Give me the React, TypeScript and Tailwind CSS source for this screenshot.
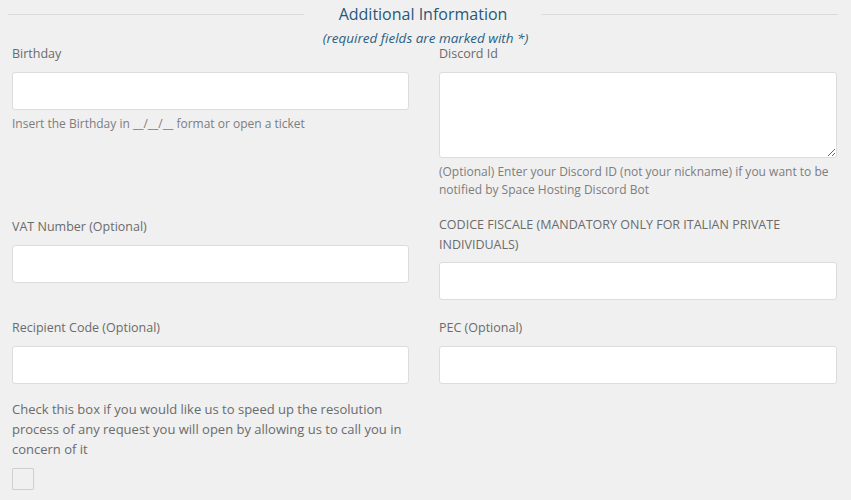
import React from "react";

function Label({ children, tight, mb }: { children: React.ReactNode; tight?: boolean; mb?: string }) {
  return (
    <div
      className={
        tight
          ? "text-[12.5px] leading-[16px] text-[#6b6b6b] mb-[10px]"
          : mb === "7"
          ? "text-[12.5px] leading-[20px] text-[#6b6b6b] mb-[7px]"
          : "text-[12.5px] leading-[20px] text-[#6b6b6b] mb-[8px]"
      }
    >
      {children}
    </div>
  );
}

function Input() {
  return (
    <input
      type="text"
      className="block w-full h-[38px] bg-white border border-[#dcdcdc] rounded-[3px] outline-none"
    />
  );
}

function Help({ children }: { children: React.ReactNode }) {
  return <div className="mt-[5px] text-[12px] leading-[18px] text-[#7d7d7d]">{children}</div>;
}

export default function App() {
  return (
    <div
      className="w-[851px] h-[500px] bg-[#f0f0f0] overflow-hidden"
      style={{ fontFamily: '"Open Sans", "Noto Sans", sans-serif' }}
    >
      <div className="flex items-center h-[28px] pl-[8px] pr-[13px]">
        <div className="flex-1 h-px bg-[#dadada]" />
        <div className="mx-[35px] text-[16px] leading-[24px] text-[#1f5a7c]">Additional Information</div>
        <div className="flex-1 h-px bg-[#dadada]" />
      </div>
      <div className="mt-[4px] text-center italic text-[13.5px] leading-[13px] text-[#2b5f80]">
        (required fields are marked with *)
      </div>
      <div className="grid grid-cols-[397px_398px] gap-x-[30px] pl-[12px] mt-[1px]">
        <div className="mb-[16px]">
          <Label tight>Birthday</Label>
          <Input />
          <Help>Insert the Birthday in __/__/__ format or open a ticket</Help>
        </div>
        <div className="mb-[16px]">
          <Label tight>Discord Id</Label>
          <textarea className="block w-full h-[86px] bg-white border border-[#dcdcdc] rounded-[3px] outline-none" />
          <Help>
            (Optional) Enter your Discord ID (not your nickname) if you want to be notified by Space Hosting
            Discord Bot
          </Help>
        </div>
        <div className="mb-[18px] pt-[2px]">
          <Label>VAT Number (Optional)</Label>
          <Input />
        </div>
        <div className="mb-[18px]">
          <Label mb="7">CODICE FISCALE (MANDATORY ONLY FOR ITALIAN PRIVATE INDIVIDUALS)</Label>
          <Input />
        </div>
        <div className="mb-[15px]">
          <Label>Recipient Code (Optional)</Label>
          <Input />
        </div>
        <div className="mb-[15px]">
          <Label>PEC (Optional)</Label>
          <Input />
        </div>
        <div>
          <div className="text-[13px] leading-[20px] text-[#6b6b6b]">
            Check this box if you would like us to speed up the resolution process of any request you will open by
            allowing us to call you in concern of it
          </div>
          <div className="mt-[9px] w-[22px] h-[22px] border border-[#cfcfcf] rounded-[1px] bg-[#f0f0f0]" />
        </div>
        <div />
      </div>
    </div>
  );
}
